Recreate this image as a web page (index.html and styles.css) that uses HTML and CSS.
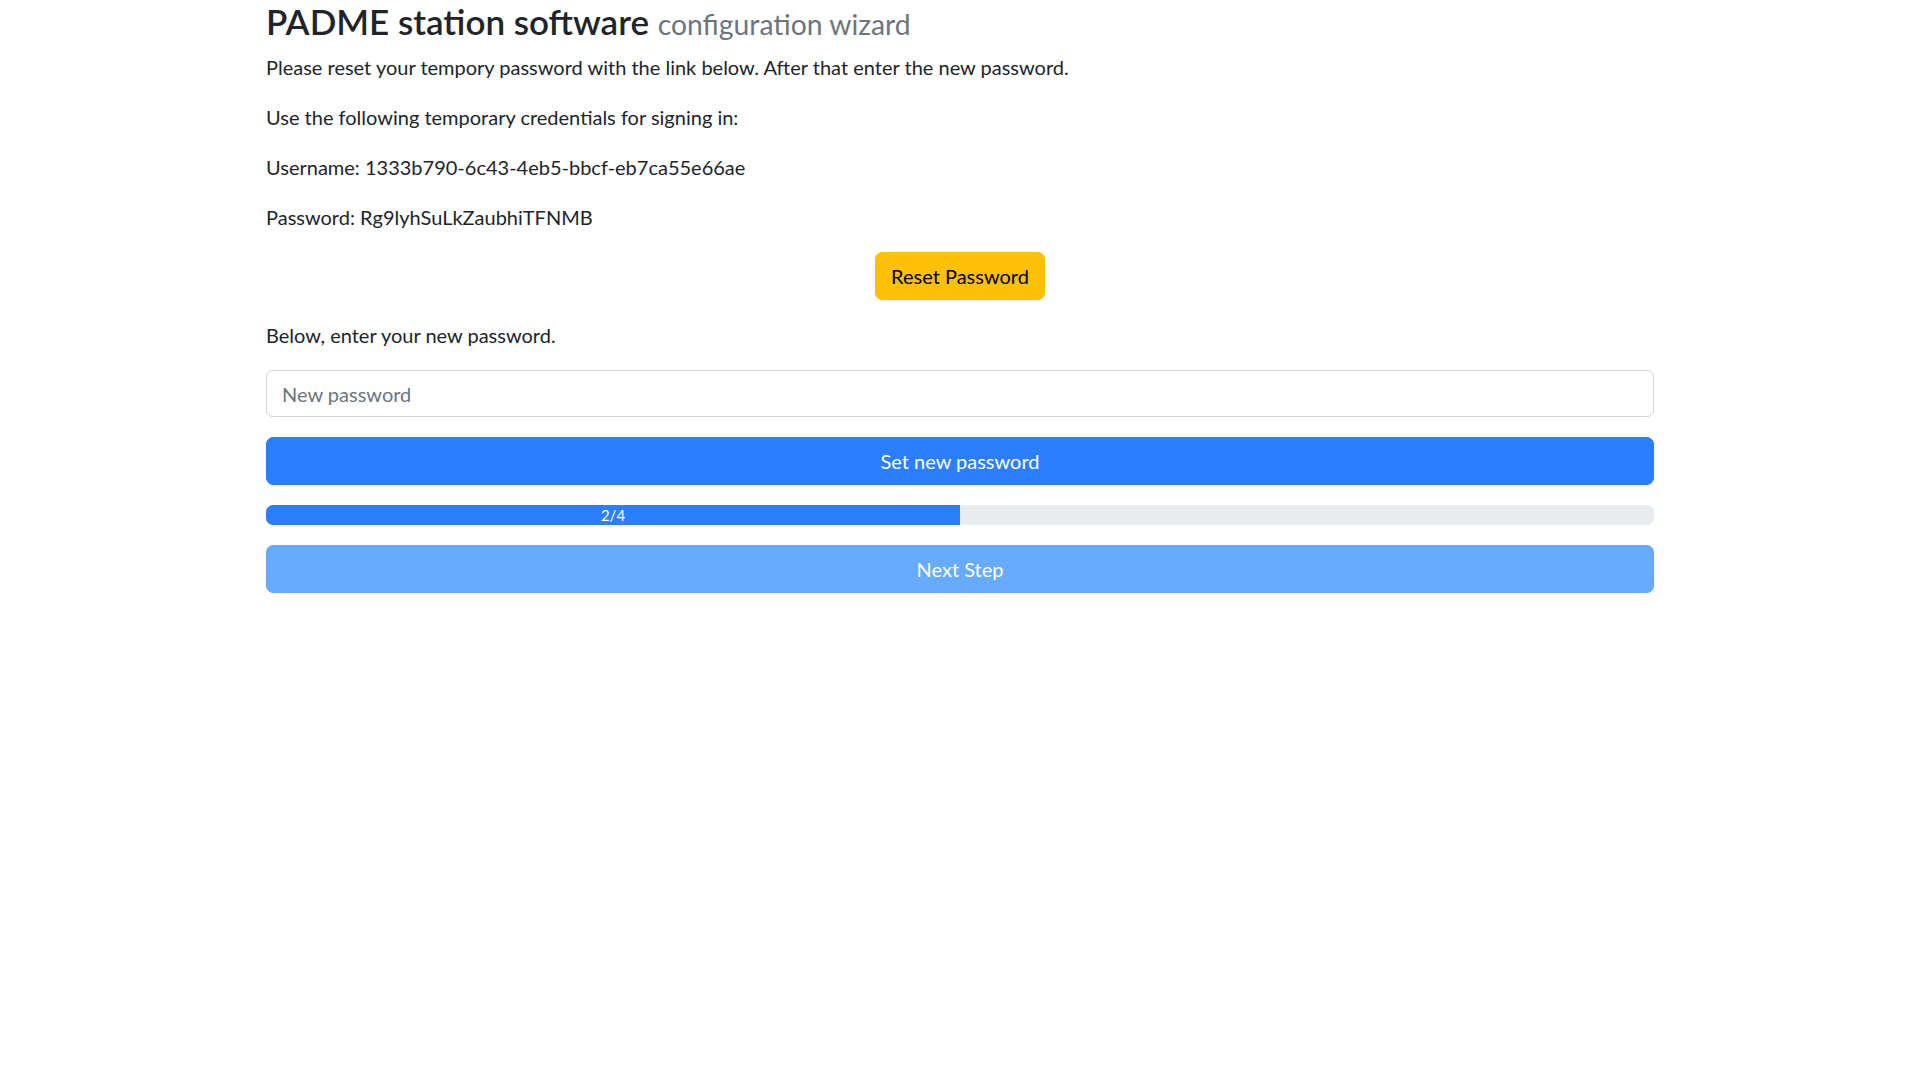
FILE: index.html
```html
<!DOCTYPE html>
<html lang="en">
<head>
<meta charset="utf-8">
<title>PADME station software</title>
<link rel="stylesheet" href="styles.css">
</head>
<body>
<main class="container">
  <h3 class="title">PADME station software <small class="muted">configuration wizard</small></h3>
  <p>Please reset your tempory password with the link below. After that enter the new password.</p>
  <p>Use the following temporary credentials for signing in:</p>
  <p>Username: 1333b790-6c43-4eb5-bbcf-eb7ca55e66ae</p>
  <p>Password: Rg9lyhSuLkZaubhiTFNMB</p>
  <div class="center">
    <button class="btn btn-warning" type="button">Reset Password</button>
  </div>
  <p>Below, enter your new password.</p>
  <form class="stack">
    <input class="form-control" type="password" placeholder="New password">
    <button class="btn btn-primary btn-block" type="button">Set new password</button>
    <div class="progress">
      <div class="progress-bar" style="width:50%">2/4</div>
    </div>
    <button class="btn btn-primary btn-block disabled" type="button" disabled>Next Step</button>
  </form>
</main>
</body>
</html>
```
FILE: styles.css
```css
* { box-sizing: border-box; }
html, body { margin: 0; background: #fff; }
body {
  font-family: Lato, "Open Sans", sans-serif;
  font-size: 20px;
  line-height: 30px;
  color: #212529;
}
.container {
  width: 1388px;
  margin: 0 auto;
}
.title {
  margin: 0 0 10px;
  height: 42px;
  font-size: 35px;
  line-height: 42px;
  font-weight: 600;
}
.muted {
  font-size: 28.3px;
  line-height: 1;
  font-weight: 400;
  color: #6c757d;
}
p { margin: 0 0 20px; }
.center {
  display: flex;
  justify-content: center;
  margin-bottom: 20px;
}
.btn {
  font-family: inherit;
  font-size: 20px;
  line-height: 30px;
  padding: 8px 15px;
  border: 1px solid transparent;
  border-radius: 7px;
  cursor: pointer;
}
.btn-warning {
  background: #ffc107;
  border-color: #ffc107;
  color: #000;
}
.stack {
  display: flex;
  flex-direction: column;
  gap: 20px;
}
.form-control {
  font-family: inherit;
  font-size: 20px;
  line-height: 30px;
  height: 47px;
  padding: 8px 15px;
  border: 1px solid #ced4da;
  border-radius: 7px;
  color: #212529;
  width: 100%;
}
.form-control::placeholder { color: #6c757d; }
.btn-primary {
  background: #2b7fff;
  border-color: #2b7fff;
  color: #fff;
}
.btn-block { width: 100%; }
.btn-primary.disabled {
  background: #66abff;
  border-color: #66abff;
  color: #fff;
  cursor: default;
}
.progress {
  height: 20px;
  background: #e9ecef;
  border-radius: 7px;
  overflow: hidden;
  display: flex;
}
.progress-bar {
  background: #2b7fff;
  color: #fff;
  font-size: 15px;
  line-height: 20px;
  text-align: center;
}
```
